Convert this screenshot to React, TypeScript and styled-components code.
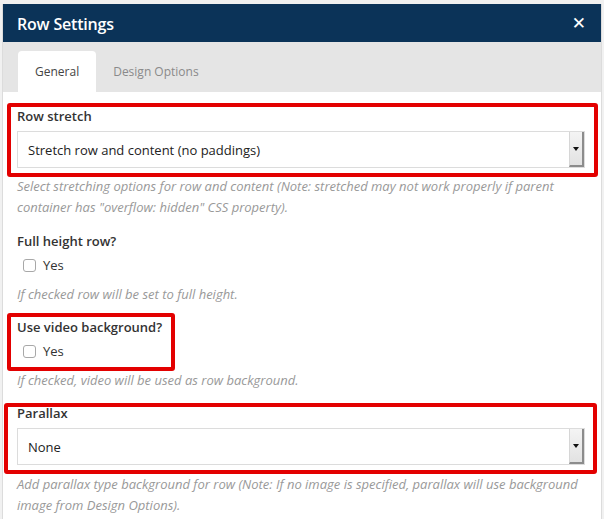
import React from "react";
import styled, { createGlobalStyle } from "styled-components";

const Global = createGlobalStyle`
  html, body { margin: 0; padding: 0; background: #f1f1f1; }
  body { font-family: "Open Sans", "Liberation Sans", sans-serif; }
  * { box-sizing: border-box; }
`;

const Dialog = styled.div`
  margin: 4px 2px 0 2px;
  width: 600px;
  height: 515px;
  background: #fff;
  border-left: 1px solid #dcdcdc;
  border-right: 1px solid #dcdcdc;
  display: flex;
  flex-direction: column;
  overflow: hidden;
  & > * { flex-shrink: 0; }
`;

const Header = styled.div`
  height: 38px;
  background: #0b3358;
  color: #fff;
  display: flex;
  align-items: center;
  justify-content: space-between;
  padding: 1px 15px 0 14px;
`;

const Title = styled.h1`
  margin: 0;
  font-size: 16px;
  font-weight: 600;
  letter-spacing: -0.2px;
`;

const Close = styled.span`
  font-size: 17px;
  font-weight: 700;
  line-height: 1;
  font-family: "DejaVu Sans", sans-serif;
`;

const TabBar = styled.div`
  height: 50px;
  background: #e5e5e5;
  display: flex;
  align-items: flex-end;
  padding-left: 15px;
`;

const Tab = styled.div<{ $active?: boolean }>`
  height: 41px;
  padding: 0 17px;
  display: flex;
  align-items: center;
  font-size: 12px;
  color: ${(p) => (p.$active ? "#444" : "#8a8a8a")};
  background: ${(p) => (p.$active ? "#fff" : "transparent")};
  border-radius: 4px 4px 0 0;
`;

const Body = styled.div`
  padding: 11px 16px 0 14px;
  display: flex;
  flex-direction: column;
`;

const Highlight = styled.div<{ $ml: number; $mr: number; $pt: number; $pb: number; $w?: number }>`
  border: 4px solid #e30000;
  border-radius: 3px;
  margin-left: ${(p) => -p.$ml}px;
  margin-right: ${(p) => (p.$w ? 0 : -p.$mr)}px;
  padding: ${(p) => Math.max(p.$pt, 0)}px ${(p) => p.$mr - 4}px ${(p) => p.$pb}px ${(p) => p.$ml - 4}px;
  ${(p) => (p.$w ? `width: ${p.$w}px;` : "")}
  & > * { margin-top: ${(p) => Math.min(p.$pt, 0)}px; }
`;

const Field = styled.div`
  display: flex;
  flex-direction: column;
`;

const Label = styled.div`
  font-size: 13px;
  font-weight: 600;
  color: #333;
  line-height: 18px;
`;

const Select = styled.div`
  margin-top: 6px;
  height: 37px;
  border: 1px solid #dcdcdc;
  display: flex;
  align-items: stretch;
  background: #fff;
`;

const SelectText = styled.div`
  flex: 1;
  display: flex;
  align-items: center;
  padding-left: 10px;
  font-size: 13px;
  color: #222;
`;

const Arrow = styled.div`
  width: 15px;
  background: linear-gradient(#f4f4f4, #e2e2e2);
  border-left: 1px solid #d6d6d6;
  border-right: 2px solid #8c8c8c;
  border-bottom: 2px solid #8c8c8c;
  display: flex;
  align-items: center;
  justify-content: center;
  &::after {
    content: "";
    border-left: 3px solid transparent;
    border-right: 3px solid transparent;
    border-top: 4px solid #111;
  }
`;

const Help = styled.p<{ $mt?: number }>`
  margin: ${(p) => p.$mt ?? 0}px 0 0 0;
  font-size: 13px;
  font-style: italic;
  color: #999;
  line-height: 21px;
`;

const CheckRow = styled.label`
  display: flex;
  align-items: center;
  gap: 7px;
  margin: 5px 0 0 6px;
  font-size: 13px;
  color: #333;
  height: 20px;
`;

const Box = styled.span`
  width: 13px;
  height: 13px;
  border: 1px solid #a8a8a8;
  border-radius: 3px;
  background: #fff;
`;

const Spacer = styled.div<{ $h: number }>`
  height: ${(p) => p.$h}px;
`;

export default function App() {
  return (
    <>
      <Global />
      <Dialog>
        <Header>
          <Title>Row Settings</Title>
          <Close>✕</Close>
        </Header>
        <TabBar>
          <Tab $active>General</Tab>
          <Tab>Design Options</Tab>
        </TabBar>
        <Body>
          <Highlight $ml={10} $mr={13} $pt={0} $pb={5}>
            <Field>
              <Label>Row stretch</Label>
              <Select>
                <SelectText>Stretch row and content (no paddings)</SelectText>
                <Arrow />
              </Select>
            </Field>
          </Highlight>
          <Help $mt={-1}>
            Select stretching options for row and content (Note: stretched may not work properly if parent
            container has "overflow: hidden" CSS property).
          </Help>
          <Spacer $h={14} />
          <Field>
            <Label>Full height row?</Label>
            <CheckRow>
              <Box />
              Yes
            </CheckRow>
          </Field>
          <Help $mt={9}>If checked row will be set to full height.</Help>
          <Spacer $h={8} />
          <Highlight $ml={10} $mr={10} $pt={1} $pb={6} $w={168}>
            <Field>
              <Label>Use video background?</Label>
              <CheckRow>
                <Box />
                Yes
              </CheckRow>
            </Field>
          </Highlight>
          <Help $mt={-1}>If checked, video will be used as row background.</Help>
          <Spacer $h={12} />
          <Highlight $ml={13} $mr={12} $pt={-3} $pb={5}>
            <Field>
              <Label>Parallax</Label>
              <Select>
                <SelectText>None</SelectText>
                <Arrow />
              </Select>
            </Field>
          </Highlight>
          <Help $mt={0}>
            Add parallax type background for row (Note: If no image is specified, parallax will use background
            image from Design Options).
          </Help>
        </Body>
      </Dialog>
    </>
  );
}
